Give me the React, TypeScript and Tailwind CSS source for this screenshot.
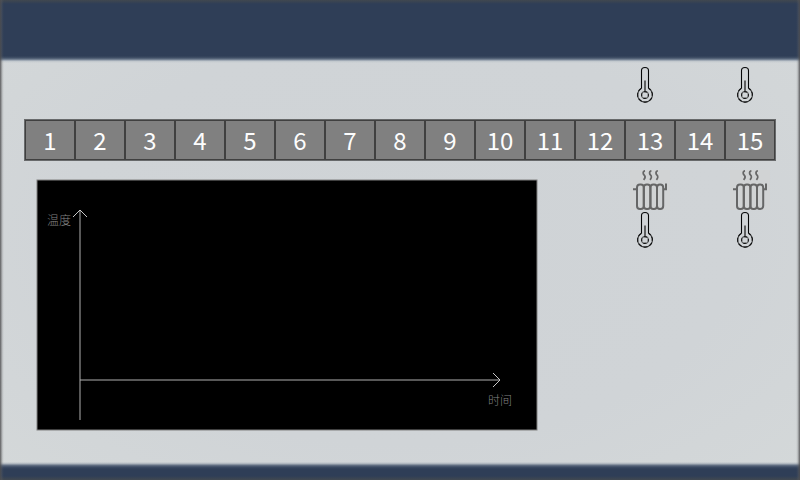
const zones = Array.from({ length: 15 }, (_, i) => i + 1);

function Thermometer() {
  return (
    <svg width="20" height="38" viewBox="0 0 20 38" fill="none" className="block">
      <path d="M6.5 22.2V4.5Q6.5 1.5 10 1.5T13.5 4.5V22.2" stroke="#050607" strokeWidth="1.1" />
      <path d="M6.5 22.2A7.4 7.4 0 1 0 13.5 22.2" stroke="#000" strokeOpacity=".75" strokeWidth="1.1" />
      <path d="M6.5 22.2A7.4 7.4 0 1 0 13.5 22.2" stroke="#000" strokeOpacity=".8" strokeWidth="1.1" strokeDasharray="4 2" />
      <path d="M10 14.5V25" stroke="#000" strokeOpacity=".55" strokeWidth="2" />
      <circle cx="10" cy="29" r="3.4" stroke="#000" strokeOpacity=".55" strokeWidth="1.1" />
      <circle cx="10" cy="29" r="3.4" stroke="#000" strokeOpacity=".8" strokeWidth="1.1" strokeDasharray="3.2 2.14" strokeDashoffset="1.6" />
    </svg>
  );
}

function Radiator() {
  return (
    <svg width="40" height="40" viewBox="0 0 40 40" fill="none" stroke="#666" strokeWidth="2" className="block bg-[#d1d3d4]">
      <rect x="7" y="14.5" width="6.8" height="24.5" rx="3" />
      <rect x="13.8" y="14.5" width="6.6" height="24.5" rx="3" />
      <rect x="20.4" y="14.5" width="6.6" height="24.5" rx="3" />
      <rect x="27" y="14.5" width="6.2" height="24.5" rx="3" />
      <path d="M3 19.3H7M33.4 19.3H36V13.5" />
      <path
        d="M15 .8C12.4 1.2 13 4 14.2 5.2S15 8.4 13.6 9.8M21.4 .8C18.8 1.2 19.4 4 20.6 5.2S21.4 8.4 20 9.8M27.8 .8C25.2 1.2 25.8 4 27 5.2S27.8 8.4 26.4 9.8"
        strokeWidth="1.8"
      />
    </svg>
  );
}

function Station() {
  return (
    <div className="flex w-10 flex-col">
      <Radiator />
      <div className="-mt-px ml-[5px] pt-[2px]">
        <Thermometer />
      </div>
    </div>
  );
}

function Chart() {
  return (
    <svg
      width="502"
      height="252"
      viewBox="36 179 502 252"
      className="block shrink-0"
      style={{ fontFamily: '"Noto Sans CJK SC", sans-serif' }}
    >
      <rect x="37" y="180" width="500" height="250" fill="#000" stroke="#808080" />
      <g fill="none" stroke="#b0b0b0">
        <path d="M80 210V420M80 380H500" />
        <path d="M73 217L80 210L87 217M493 373L500 380L493 387" stroke="#c8c8c8" />
      </g>
      <g fill="#868686" fontSize="12" fontWeight="300" opacity=".99">
        <text x="47" y="224.5">温度</text>
        <text x="488" y="404.5">时间</text>
      </g>
    </svg>
  );
}

export default function App() {
  return (
    <div className="relative flex h-[480px] w-[800px] flex-col overflow-hidden bg-[radial-gradient(ellipse_at_center,#cfd3d6_0%,#d0d4d7_60%,#d4d8d9_100%)]">
      <header className="h-[63px] shrink-0 bg-[linear-gradient(180deg,#414850_0px,#384353_2px,#2f3e57_4px,#2f3e57_56px,#44536a_58px,#8490a0_60px,#bec5cb_61px,transparent_63px)]" />
      <main className="flex h-[399px] shrink-0 flex-col">
        <div className="flex h-[57px] gap-20 pt-[3px] pl-[635px]">
          <Thermometer />
          <Thermometer />
        </div>
        <div
          className="ml-[25px] flex h-10 w-[750px] text-[24px] leading-[39px] text-white shadow-[0_0_0_1px_rgba(0,0,0,.5)]"
          style={{ fontFamily: '"Noto Sans CJK SC", sans-serif' }}
        >
          {zones.map((n) => (
            <div
              key={n}
              className="flex w-[50px] shrink-0 justify-center bg-[#808080] shadow-[inset_0_0_0_1px_rgba(0,0,0,.5)]"
            >
              <span className="opacity-[.99]">{n}</span>
            </div>
          ))}
        </div>
        <div className="flex pl-9">
          <div className="pt-[19px]">
            <Chart />
          </div>
          <div className="flex gap-[60px] pt-[10px] pl-[92px]">
            <Station />
            <Station />
          </div>
        </div>
      </main>
      <footer className="h-[18px] shrink-0 bg-[linear-gradient(180deg,transparent_0px,#a5adb7_2px,#6a7789_3px,#3d4c64_5px,#2f3e57_7px,#2f3e57_14px,#384353_16px,#414850_18px)]" />
      <div className="pointer-events-none absolute inset-0 bg-[linear-gradient(90deg,rgba(75,75,77,.85)_0px,rgba(85,85,87,.65)_1px,rgba(95,95,97,.3)_2px,rgba(95,95,97,.1)_3px,transparent_4px,transparent_796px,rgba(95,95,97,.1)_797px,rgba(95,95,97,.3)_798px,rgba(85,85,87,.65)_799px,rgba(75,75,77,.85)_800px)]" />
    </div>
  );
}
